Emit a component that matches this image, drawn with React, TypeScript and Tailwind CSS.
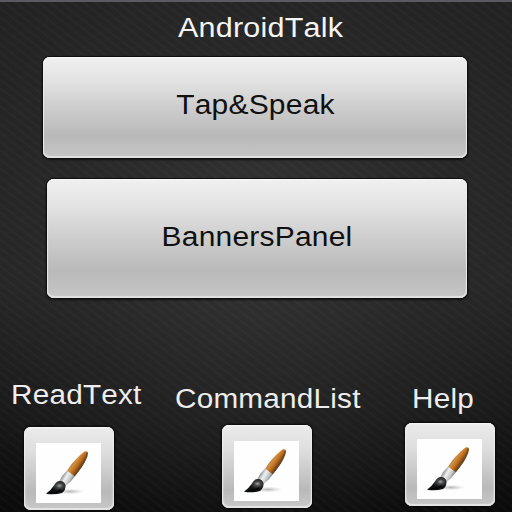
import type { ReactNode } from "react";

const label =
  "whitespace-nowrap font-['Liberation_Sans',Arial,sans-serif] text-[27px] leading-[30px] tracking-[0.2px] [font-kerning:none]";

function PanelButton({ children, className }: { children: ReactNode; className: string }) {
  return (
    <button
      className={`${label} flex items-start justify-center rounded-[7px] bg-[linear-gradient(180deg,#f0f0f0_0%,#e2e2e2_24%,#cdcdcd_50%,#b9b9b9_78%,#c6c6c6_100%)] text-[#101010] shadow-[0_0_0_1px_#101010,0_1px_2px_1px_#121212,inset_0_1px_1px_#f8f8f8,inset_0_-2px_1px_#e2e2e2,inset_1px_0_1px_#eaeaea,inset_-1px_0_1px_#eaeaea] ${className}`}
    >
      <span className="inline-block scale-x-[1.11]">{children}</span>
    </button>
  );
}

function Caption({ children, className }: { children: ReactNode; className: string }) {
  return (
    <h2 className={`${label} font-normal text-[#ededed] ${className}`}>
      <span className="inline-block origin-left scale-x-[1.1]">{children}</span>
    </h2>
  );
}

function Brush({ id }: { id: string }) {
  return (
    <svg width="65" height="60" viewBox="0 0 65 60" className="block bg-[#fefefe]">
      <defs>
        <linearGradient id={`${id}-wood`} x1="34" y1="19" x2="44" y2="26" gradientUnits="userSpaceOnUse">
          <stop offset="0" stopColor="#7d5428" />
          <stop offset=".35" stopColor="#d39042" />
          <stop offset=".65" stopColor="#bd6c1c" />
          <stop offset="1" stopColor="#5a3819" />
        </linearGradient>
        <linearGradient id={`${id}-metal`} x1="25" y1="33" x2="37" y2="40" gradientUnits="userSpaceOnUse">
          <stop offset="0" stopColor="#737779" />
          <stop offset=".35" stopColor="#f0f0f0" />
          <stop offset=".65" stopColor="#c5c8ca" />
          <stop offset="1" stopColor="#53575b" />
        </linearGradient>
        <radialGradient id={`${id}-shade`}>
          <stop offset="0" stopColor="#888" stopOpacity=".6" />
          <stop offset="1" stopColor="#aaa" stopOpacity="0" />
        </radialGradient>
        <radialGradient id={`${id}-tip`} cx=".69" cy=".36" r=".4">
          <stop offset="0" stopColor="#a0a4a5" />
          <stop offset=".4" stopColor="#454849" />
          <stop offset="1" stopColor="#111213" />
        </radialGradient>
      </defs>
      <ellipse cx="34" cy="48.5" rx="14" ry="2.8" fill={`url(#${id}-shade)`} />
      <path d="M31 28C35 21 42 13 48.5 8.4Q51.8 7.4 52 10.5C51 18 44 27 38.5 33.5Z" fill={`url(#${id}-wood)`} />
      <path d="M51.2 9.5Q50.5 18 38.5 33" fill="none" stroke="#6b4825" strokeWidth="1" />
      <path d="M31 27.5L38.8 33.5Q34.5 39.5 28.5 44L23 38.8Q26 32 31 27.5Z" fill={`url(#${id}-metal)`} />
      <path d="M22 38.2Q27.5 36.8 29.5 42Q30 47 26 50Q19 52.2 10 50.8Q14.5 47.5 17 43.8Q19 39.5 22 38.2Z" fill={`url(#${id}-tip)`} />
      <path d="M14 49.8Q20 50 25 47" stroke="#050606" strokeWidth="1.8" fill="none" />
    </svg>
  );
}

function IconButton({ name }: { name: string }) {
  return (
    <button
      aria-label={name}
      className="flex h-[83px] w-[90px] shrink-0 items-start rounded-[7px] bg-[linear-gradient(180deg,#ebebeb_0%,#dedede_30%,#b9b9b9_78%,#c8c8c8_100%)] pl-[12px] pt-[16px] shadow-[0_0_2px_1px_#090909,inset_0_1px_1px_#f8f8f8,inset_0_-2px_1px_#e5e5e5,inset_1px_0_2px_#ededed,inset_-1px_0_2px_#ededed]"
    >
      <Brush id={name} />
    </button>
  );
}

export default function App() {
  return (
    <main className="flex h-[512px] w-[512px] flex-col overflow-hidden border-t-[2px] border-[#5b5b5f] bg-[repeating-linear-gradient(38deg,transparent_0px,transparent_3px,rgba(255,255,255,0.024)_5px,transparent_7px),radial-gradient(ellipse_330px_340px_at_50%_45%,rgba(57,57,57,0.72)_0%,rgba(45,45,45,0.42)_58%,transparent_100%),linear-gradient(180deg,#222222_0%,#252525_55%,#171717_82%,#0a0a0a_100%)]">
      <h1 className={`${label} mt-[11px] pl-[178px] font-normal text-[#f4f4f4]`}>
        <span className="inline-block origin-left scale-x-[1.13]">AndroidTalk</span>
      </h1>
      <PanelButton className="ml-[43px] mt-[14px] h-[101px] w-[424px] pt-[33px]">Tap&amp;Speak</PanelButton>
      <PanelButton className="ml-[47px] mt-[21px] h-[119px] w-[420px] pt-[43px]">BannersPanel</PanelButton>

      <div className="mt-[79px] flex h-[135px] items-start">
        <section className="flex w-[155px] flex-col pt-[3px]">
          <Caption className="pl-[11px]">ReadText</Caption>
          <div className="pl-[24px] pt-[17px]"><IconButton name="ReadText" /></div>
        </section>
        <section className="flex w-[230px] flex-col pt-[7px]">
          <Caption className="pl-[20px]">CommandList</Caption>
          <div className="pl-[67px] pt-[11px]"><IconButton name="CommandList" /></div>
        </section>
        <section className="flex w-[127px] flex-col pt-[7px]">
          <Caption className="pl-[27px]">Help</Caption>
          <div className="pl-[20px] pt-[9px]"><IconButton name="Help" /></div>
        </section>
      </div>
    </main>
  );
}
